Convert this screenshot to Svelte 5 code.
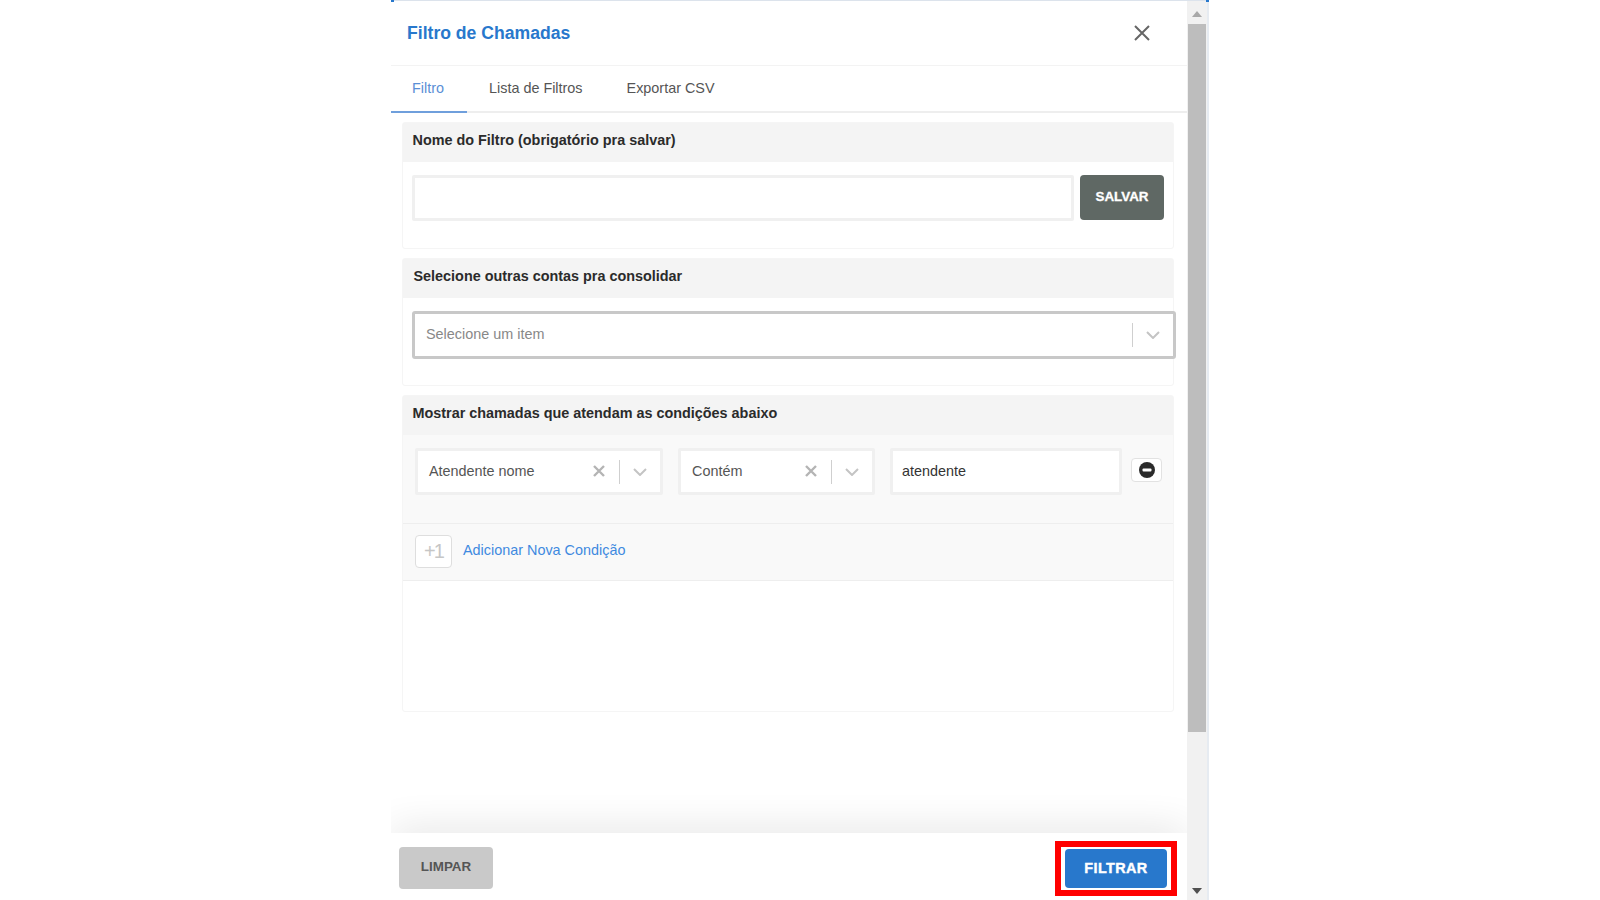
<script>
	let nome = $state('')
	let valor = $state('atendente')
</script>

<div class="page">
	<div class="panel">
		<div class="main">
			<header class="head">
				<h1>Filtro de Chamadas</h1>
				<button class="close" aria-label="Fechar">
					<svg width="18" height="18" viewBox="0 0 18 18"><path d="M2 2l14 14M16 2L2 16" stroke="#666" stroke-width="2" fill="none" /></svg>
				</button>
			</header>

			<nav class="tabs">
				<span class="tab active">Filtro</span>
				<span class="tab">Lista de Filtros</span>
				<span class="tab">Exportar CSV</span>
			</nav>

			<div class="content">
				<section class="box first">
					<h2>Nome do Filtro (obrigatório pra salvar)</h2>
					<div class="box-body name-row">
						<input class="field name" bind:value={nome} />
						<button class="save">SALVAR</button>
					</div>
				</section>

				<section class="box second">
					<h2 class="shift">Selecione outras contas pra consolidar</h2>
					<div class="box-body">
						<div class="select wide">
							<span class="placeholder">Selecione um item</span>
							<i class="sep"></i>
							<svg class="chev" width="14" height="8" viewBox="0 0 14 8"><path d="M1 1l6 6 6-6" stroke="#c4c4c4" stroke-width="2" fill="none" /></svg>
						</div>
					</div>
				</section>

				<section class="box third">
					<h2>Mostrar chamadas que atendam as condições abaixo</h2>
					<div class="conditions">
						<div class="cond-row">
							<div class="select small first-sel">
								<span class="value">Atendente nome</span>
								<svg class="x" width="12" height="12" viewBox="0 0 12 12"><path d="M1 1l10 10M11 1L1 11" stroke="#b4b4b4" stroke-width="2.4" fill="none" /></svg>
								<i class="sep"></i>
								<svg class="chev" width="14" height="8" viewBox="0 0 14 8"><path d="M1 1l6 6 6-6" stroke="#c4c4c4" stroke-width="2" fill="none" /></svg>
							</div>
							<div class="select small second-sel">
								<span class="value">Contém</span>
								<svg class="x" width="12" height="12" viewBox="0 0 12 12"><path d="M1 1l10 10M11 1L1 11" stroke="#b4b4b4" stroke-width="2.4" fill="none" /></svg>
								<i class="sep"></i>
								<svg class="chev" width="14" height="8" viewBox="0 0 14 8"><path d="M1 1l6 6 6-6" stroke="#c4c4c4" stroke-width="2" fill="none" /></svg>
							</div>
							<input class="field cond" bind:value={valor} />
							<button class="remove" aria-label="Remover">
								<svg width="16" height="16" viewBox="0 0 16 16"><circle cx="8" cy="8" r="8" fill="#2b2b2b" /><rect x="3.5" y="6.5" width="9" height="3" rx="1" fill="#fff" /></svg>
							</button>
						</div>
						<div class="add-row">
							<span class="plus">+1</span>
							<span class="link">Adicionar Nova Condição</span>
						</div>
					</div>
				</section>
			</div>

			<div class="fade"></div>
			<footer class="foot">
				<button class="clear">LIMPAR</button>
				<div class="mark">
					<button class="apply">FILTRAR</button>
				</div>
			</footer>
		</div>

		<div class="scrollbar">
			<svg width="10" height="6" viewBox="0 0 10 6"><path d="M0 6L5 0l5 6z" fill="#a8a8a8" /></svg>
			<div class="track"><div class="thumb"></div></div>
			<svg width="10" height="6" viewBox="0 0 10 6"><path d="M0 0l5 6 5-6z" fill="#505050" /></svg>
		</div>
	</div>
</div>

<style>
	:global(body) {
		background: #fff;
		font-family: "Liberation Sans", Arial, sans-serif;
	}

	.page {
		display: flex;
		height: 900px;
		padding-left: 391px;
		box-sizing: border-box;
		overflow: hidden;
	}

	.panel {
		position: relative;
		display: flex;
		width: 818px;
		height: 900px;
		box-sizing: border-box;
		border-top: 1px solid #dce3ec;
		border-right: 2px solid #e6ebf1;
		background: #fff;
	}

	/* the blue corners peeking out at the top of the panel */
	.panel::before,
	.panel::after {
		content: '';
		position: absolute;
		top: -1px;
		width: 3px;
		height: 2px;
		background: #2878cc;
	}

	.panel::before {
		left: 0;
	}

	.panel::after {
		right: -2px;
	}

	.main {
		width: 796px;
		display: flex;
		flex-direction: column;
	}

	.head {
		height: 65px;
		box-sizing: border-box;
		padding: 0 36px 0 16px;
		display: flex;
		align-items: center;
		justify-content: space-between;
		border-bottom: 1px solid #f3f3f3;
	}

	h1 {
		margin: 0;
		font-size: 17.6px;
		font-weight: 700;
		color: #2878cc;
	}

	.close {
		padding: 0;
		border: 0;
		background: none;
		display: flex;
	}

	.tabs {
		display: flex;
		height: 47px;
		box-sizing: border-box;
		border-bottom: 2px solid #eeeeee;
	}

	.tab {
		padding: 0 22px;
		height: 47px;
		box-sizing: border-box;
		line-height: 45px;
		font-size: 14.4px;
		color: #555;
	}

	.tab.active {
		padding: 0 23px 0 21px;
		color: #5a8fd6;
		border-bottom: 2px solid #6f9fdc;
	}

	.content {
		flex: 1;
		padding: 9px 0 0 11px;
	}

	.box {
		width: 772px;
		box-sizing: border-box;
		border: 1px solid #f5f5f5;
		border-radius: 3px;
		margin-bottom: 9px;
	}

	h2 {
		margin: 0;
		height: 39px;
		line-height: 34px;
		padding: 0 9.5px;
		background: #f4f4f4;
		font-size: 14.4px;
		font-weight: 700;
		color: #2b2b2b;
	}

	h2.shift {
		padding-left: 10.5px;
	}

	.box-body {
		padding: 13px 9px;
	}

	.first .box-body {
		height: 86px;
		box-sizing: border-box;
	}

	.name-row {
		display: flex;
		gap: 6px;
		align-items: flex-start;
	}

	.field {
		box-sizing: border-box;
		border: 3px solid #f0f0f0;
		border-radius: 2px;
		background: #fff;
		font: 14.4px "Liberation Sans", Arial, sans-serif;
		color: #333;
		outline: none;
	}

	.name {
		width: 662px;
		height: 46px;
	}

	.save {
		width: 84px;
		height: 45px;
		border: 0;
		border-radius: 4px;
		background: #5f6864;
		color: #fff;
		font: 700 13.4px "Liberation Sans", Arial, sans-serif;
		padding-bottom: 3px;
		-webkit-text-stroke: 0.3px #fff;
	}

	.second .box-body {
		height: 87px;
		box-sizing: border-box;
	}

	.select {
		display: flex;
		align-items: center;
		box-sizing: border-box;
		background: #fff;
		border-radius: 2px;
		font-size: 14.4px;
	}

	.wide {
		width: 764px;
		height: 48px;
		border: 3px solid #c8c8c8;
		border-radius: 3px;
		padding: 0 13px 0 11px;
	}

	.placeholder {
		flex: 1;
		padding-bottom: 2px;
		color: #888;
	}

	.sep {
		width: 1px;
		height: 24px;
		background: #cfcfcf;
	}

	.chev {
		margin-left: 13px;
	}

	.third {
		height: 317px;
	}

	.conditions {
		background: #f9f9f9;
		border-bottom: 1px solid #eeeeee;
	}

	.cond-row {
		display: flex;
		align-items: flex-start;
		height: 89px;
		box-sizing: border-box;
		padding: 13px 0 0 12px;
		border-bottom: 1px solid #eeeeee;
	}

	.small {
		height: 47px;
		border: 3px solid #f0f0f0;
		padding: 0 13px 2px 11px;
	}

	.small .sep,
	.small .chev {
		margin-top: 2px;
	}

	.value {
		flex: 1;
		color: #555;
	}

	.first-sel {
		width: 248px;
		margin-right: 15px;
	}

	.second-sel {
		width: 197px;
		margin-right: 15px;
	}

	.small .x {
		margin-right: 14px;
	}

	.cond {
		width: 232px;
		height: 47px;
		padding: 0 9px 2px;
		margin-right: 9px;
	}

	.remove {
		width: 31px;
		height: 24px;
		margin-top: 10px;
		padding: 0;
		display: flex;
		align-items: center;
		justify-content: center;
		background: #fff;
		border: 1px solid #e2e2e2;
		border-radius: 4px;
	}

	.add-row {
		height: 56px;
		box-sizing: border-box;
		padding: 11px 0 0 12px;
		display: flex;
		align-items: flex-start;
		gap: 11px;
	}

	.plus {
		width: 37px;
		height: 33px;
		box-sizing: border-box;
		border: 1px solid #dedede;
		border-radius: 4px;
		background: #fff;
		color: #c6c6c6;
		font-size: 20px;
		letter-spacing: -2px;
		line-height: 31px;
		text-align: center;
	}

	.link {
		font-size: 14.4px;
		line-height: 30px;
		color: #3f8ae0;
	}

	.fade {
		position: relative;
		height: 60px;
		overflow: hidden;
	}

	.fade::after {
		content: '';
		position: absolute;
		left: 0;
		right: 0;
		top: 100%;
		height: 20px;
		box-shadow: 0 0 40px rgba(0, 0, 0, 0.16);
	}

	.foot {
		height: 67px;
		box-sizing: border-box;
		display: flex;
		justify-content: space-between;
		align-items: flex-start;
		padding: 8px 10px 0 8px;
	}

	.clear {
		width: 94px;
		height: 42px;
		margin-top: 6px;
		padding-bottom: 4px;
		border: 0;
		border-radius: 4px;
		background: #c9c9c9;
		color: #555;
		font: 700 13.4px "Liberation Sans", Arial, sans-serif;
	}

	.mark {
		width: 122px;
		height: 55px;
		box-sizing: border-box;
		border: 6px solid #f00;
		padding: 2px 4px;
	}

	.apply {
		display: block;
		width: 102px;
		height: 39px;
		border: 0;
		padding: 0 0 2px;
		border-radius: 4px;
		background: #2878cc;
		color: #fff;
		font: 700 14.4px "Liberation Sans", Arial, sans-serif;
		letter-spacing: 0.4px;
		-webkit-text-stroke: 0.4px #fff;
	}

	.scrollbar {
		width: 20px;
		display: flex;
		flex-direction: column;
		align-items: center;
		background: #f1f1f1;
		padding: 10px 0 6px;
		box-sizing: border-box;
	}

	.track {
		flex: 1;
		width: 100%;
		padding-top: 7px;
		box-sizing: border-box;
	}

	.thumb {
		width: 18px;
		height: 708px;
		margin: 0 auto;
		background: #bdbdbd;
	}
</style>
